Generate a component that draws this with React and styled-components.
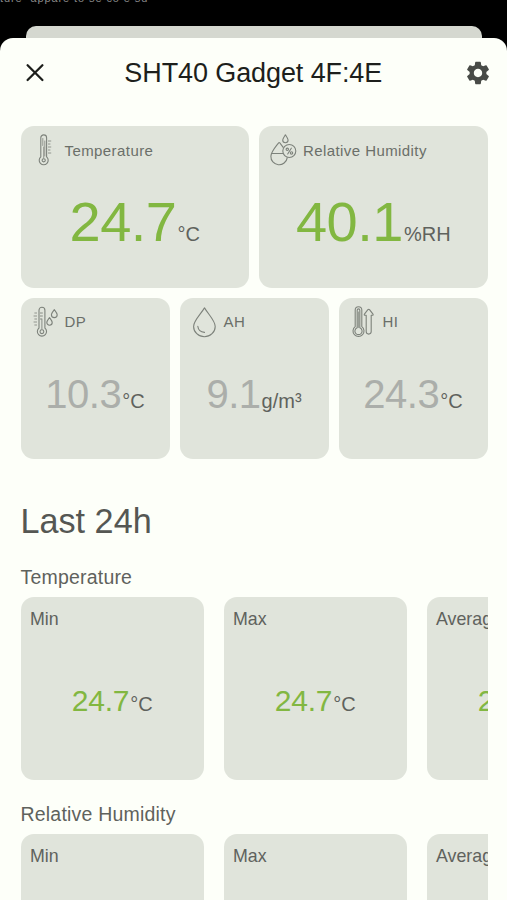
import React from "react";
import styled, { createGlobalStyle } from "styled-components";
import { MdSettings } from "react-icons/md";

const GlobalStyle = createGlobalStyle`
    * {
        box-sizing: border-box;
    }

    body {
        margin: 0;
        background: #000;
        font-family: "Liberation Sans", Arial, sans-serif;
        color: #5f625d;
    }
`;

const Screen = styled.div`
    height: 900px;
    display: flex;
    flex-direction: column;
    overflow: hidden;
    background: #000;
`;

const StatusStrip = styled.div`
    flex: 0 0 25.5px;
    height: 25.5px;
    overflow: hidden;
    color: #8a8a8a;
    font-size: 11px;
    line-height: 12px;
    letter-spacing: 0.9px;
    white-space: pre;

    span {
        display: block;
        margin-top: -8.5px;
    }
`;

const BackSheet = styled.div`
    flex: 0 0 12.5px;
    margin: 0 25.5px 0 26px;
    background: #d5d8d0;
    border-radius: 10px 10px 0 0;
`;

const Sheet = styled.div`
    flex: 1;
    min-height: 0;
    overflow: hidden;
    padding: 0 19.5px 0 20.5px;
    background: #fdfff9;
    border-radius: 13px 13px 0 0;
`;

const Header = styled.header`
    display: flex;
    align-items: center;
    justify-content: space-between;
    height: 69px;
    margin: 0 -4.5px 19px 0;
`;

const IconButton = styled.button`
    display: flex;
    align-items: center;
    justify-content: center;
    width: 29px;
    height: 29px;
    padding: 0;
    border: 0;
    background: none;
    color: ${(props) => props.color};
`;

const Title = styled.h1`
    margin: 0;
    padding-right: 6px;
    font-size: 27px;
    font-weight: 400;
    line-height: 32px;
    letter-spacing: -0.1px;
    color: #1d1f1c;
`;

const CardRow = styled.div`
    display: grid;
    grid-template-columns: repeat(${(props) => props.$columns}, 1fr);
    gap: 10px;
    margin-bottom: 10px;
`;

const Card = styled.div`
    display: flex;
    flex-direction: column;
    height: 161.5px;
    padding: 8px 0 9px;
    background: #e0e4db;
    border-radius: 13px;
`;

const CardHead = styled.div`
    display: flex;
    align-items: center;
    height: 32px;
    padding-left: 10px;
    font-size: 15px;
    letter-spacing: 0.42px;
    color: #6b6f69;
    white-space: nowrap;
`;

const Glyph = styled.svg`
    flex: none;
    width: 34px;
    height: 32px;
    fill: none;
    stroke: #7d827b;
    stroke-width: 1.1;
    stroke-linecap: round;
    stroke-linejoin: round;
`;

const Reading = styled.div`
    flex: 1;
    display: flex;
    align-items: center;
    justify-content: center;
`;

const Pair = styled.div`
    display: flex;
    align-items: baseline;
    line-height: 1;
    white-space: nowrap;
`;

const Value = styled.span`
    font-size: ${(props) => props.$size}px;
    letter-spacing: ${(props) => (props.$size > 30 ? "-0.5px" : "-0.2px")};
    color: ${(props) => (props.$muted ? "#abaeaa" : "#82b741")};
`;

const Unit = styled.span`
    margin-left: 1px;
    font-size: 20px;
    color: #5f625d;
`;

const Heading = styled.h2`
    margin: 42px 0 0;
    font-size: 34.2px;
    font-weight: 400;
    line-height: 41.5px;
    color: #555753;
`;

const Section = styled.section`
    padding-top: 22.5px;
`;

const SectionTitle = styled.h3`
    margin: 0 0 8px;
    font-size: 19.5px;
    font-weight: 400;
    line-height: 24px;
    letter-spacing: 0.2px;
`;

const Strip = styled.div`
    display: flex;
    gap: 19.5px;
    overflow: hidden;
`;

const StatCard = styled.div`
    flex: 0 0 183.5px;
    display: flex;
    flex-direction: column;
    height: 182.5px;
    padding: 11px 0 8px;
    background: #e0e4db;
    border-radius: 13px;
`;

const StatLabel = styled.div`
    height: 22px;
    padding-left: 9.5px;
    font-size: 17.8px;
    line-height: 22px;
`;

function CloseIcon() {
  return (
    <svg width="20" height="20" viewBox="0 0 20 20" stroke="currentColor" strokeWidth="2.3" strokeLinecap="round">
        <path d="M2.6 2.2 17.4 17M17.4 2.2 2.6 17" />
    </svg>
  );
}

function ThermometerIcon() {
  return (
    <Glyph viewBox="0 0 34 32">
        <path d="M9.8 22.8V3.8a2.9 2.9 0 0 1 5.8 0v19a4.5 4.5 0 1 1-5.8 0Z" />
        <path d="M12.7 13v11M11.8 4.5v7M13.8 7v15" strokeWidth="0.8" />
        <circle cx="12.7" cy="26.3" r="1.6" />
        <path d="M17.4 7h2.4M17.4 10h1.6M17.4 13h2.4M17.4 16h1.6M17.4 19h2.4" strokeWidth="0.8" />
    </Glyph>
  );
}

function HumidityIcon() {
  return (
    <Glyph viewBox="0 0 34 32">
        <path d="M16.4.9c1.5 2.2 2.7 3.7 2.7 5.2a2.7 2.7 0 0 1-5.4 0c0-1.5 1.2-3 2.7-5.2Z" />
        <path d="M14.2 13.4 10.8 8.8q-.6-.6-1.2 0C5.8 13.8 1.9 18 1.9 22.2a8.2 8.2 0 0 0 16.3 1.6" />
        <path d="M2.5 19.5h11.2" />
        <circle cx="20.3" cy="17" r="6.5" />
        <path d="m22.3 14.2-3.6 5.8" />
        <circle cx="18.3" cy="15.3" r="1.2" />
        <circle cx="22.5" cy="18.9" r="1.2" />
    </Glyph>
  );
}

function DewPointIcon() {
  return (
    <Glyph viewBox="0 0 34 32">
        <path d="M8 22V4.2a2.9 2.9 0 0 1 5.9 0V22a4.6 4.6 0 1 1-5.9 0Z" />
        <path d="M10.9 13v10M9.4 7h2M9.4 10h2M9.4 13h1" strokeWidth="0.9" />
        <circle cx="10.9" cy="25.7" r="1.9" />
        <path d="M3.8 7h1.8M3 10h2.6M3.8 13h1.8M3 16h2.6M3.8 19h1.8" strokeWidth="0.8" />
        <path d="M23.3 3.7c1.6 2.1 2.9 3.5 2.9 5a2.9 2.9 0 0 1-5.8 0c0-1.5 1.3-2.9 2.9-5Z" />
        <path d="M18.5 11.6c1.5 2.1 2.7 3.4 2.7 4.9a2.7 2.7 0 0 1-5.4 0c0-1.5 1.2-2.8 2.7-4.9Z" />
    </Glyph>
  );
}

function DropIcon() {
  return (
    <Glyph viewBox="0 0 34 32">
        <path d="M14.5 1.9C10.2 9 3.6 14.8 3.6 20.4a10.8 10.3 0 0 0 21.6 0C25.2 14.8 18.8 9 14.5 1.9Z" />
        <path d="M7.8 20.3c.4 3.4 3.2 5.8 6.7 6.1" />
    </Glyph>
  );
}

function HeatIndexIcon() {
  return (
    <Glyph viewBox="0 0 34 32">
        <path d="M6.2 20.6V4a3.3 3.3 0 0 1 6.6 0v16.6a5.5 5.5 0 1 1-6.6 0Z" />
        <path d="M8.2 21.7V4.2a1.3 1.3 0 0 1 2.6 0v17.5a3.6 3.6 0 1 1-2.6 0Z" />
        <path d="M9.5 6v15.5" strokeWidth="0.7" />
        <path d="M17.2 25.6V9.2h-1.5q-.8-.3-.3-1l3.5-4.5q.8-.8 1.6 0L24 8.2q.5.7-.3 1h-1.5v16.4a2.5 2.5 0 0 1-5 0Z" />
    </Glyph>
  );
}

function Measurement({ value, unit, size, muted }) {
  return (
    <Reading>
        <Pair>
            <Value $size={size} $muted={muted}>{value}</Value>
            <Unit>{unit}</Unit>
        </Pair>
    </Reading>
  );
}

function SensorCard({ icon, label, ...reading }) {
  return (
    <Card>
        <CardHead>
            {icon}
            {label}
        </CardHead>
        <Measurement {...reading} />
    </Card>
  );
}

function StatSection({ title, value, unit }) {
  return (
    <Section>
        <SectionTitle>{title}</SectionTitle>
        <Strip>
            {["Min", "Max", "Average"].map((label) => (
              <StatCard key={label}>
                  <StatLabel>{label}</StatLabel>
                  <Measurement value={value} unit={unit} size={30} />
              </StatCard>
            ))}
        </Strip>
    </Section>
  );
}

function App() {
  return (
    <Screen>
        <GlobalStyle />
        <StatusStrip><span>ture  appare to se co e su</span></StatusStrip>
        <BackSheet />
        <Sheet>
            <Header>
                <IconButton color="#1d1f1c" aria-label="Close"><CloseIcon /></IconButton>
                <Title>SHT40 Gadget 4F:4E</Title>
                <IconButton color="#484b47" aria-label="Settings"><MdSettings size={28} /></IconButton>
            </Header>

            <CardRow $columns={2}>
                <SensorCard icon={<ThermometerIcon />} label="Temperature" value="24.7" unit="°C" size={56} />
                <SensorCard icon={<HumidityIcon />} label="Relative Humidity" value="40.1" unit="%RH" size={56} />
            </CardRow>
            <CardRow $columns={3}>
                <SensorCard icon={<DewPointIcon />} label="DP" value="10.3" unit="°C" size={40} muted />
                <SensorCard icon={<DropIcon />} label="AH" value="9.1" unit="g/m³" size={40} muted />
                <SensorCard icon={<HeatIndexIcon />} label="HI" value="24.3" unit="°C" size={40} muted />
            </CardRow>

            <Heading>Last 24h</Heading>
            <StatSection title="Temperature" value="24.7" unit="°C" />
            <StatSection title="Relative Humidity" value="40.1" unit="%RH" />
        </Sheet>
    </Screen>
  );
}

export default App;
